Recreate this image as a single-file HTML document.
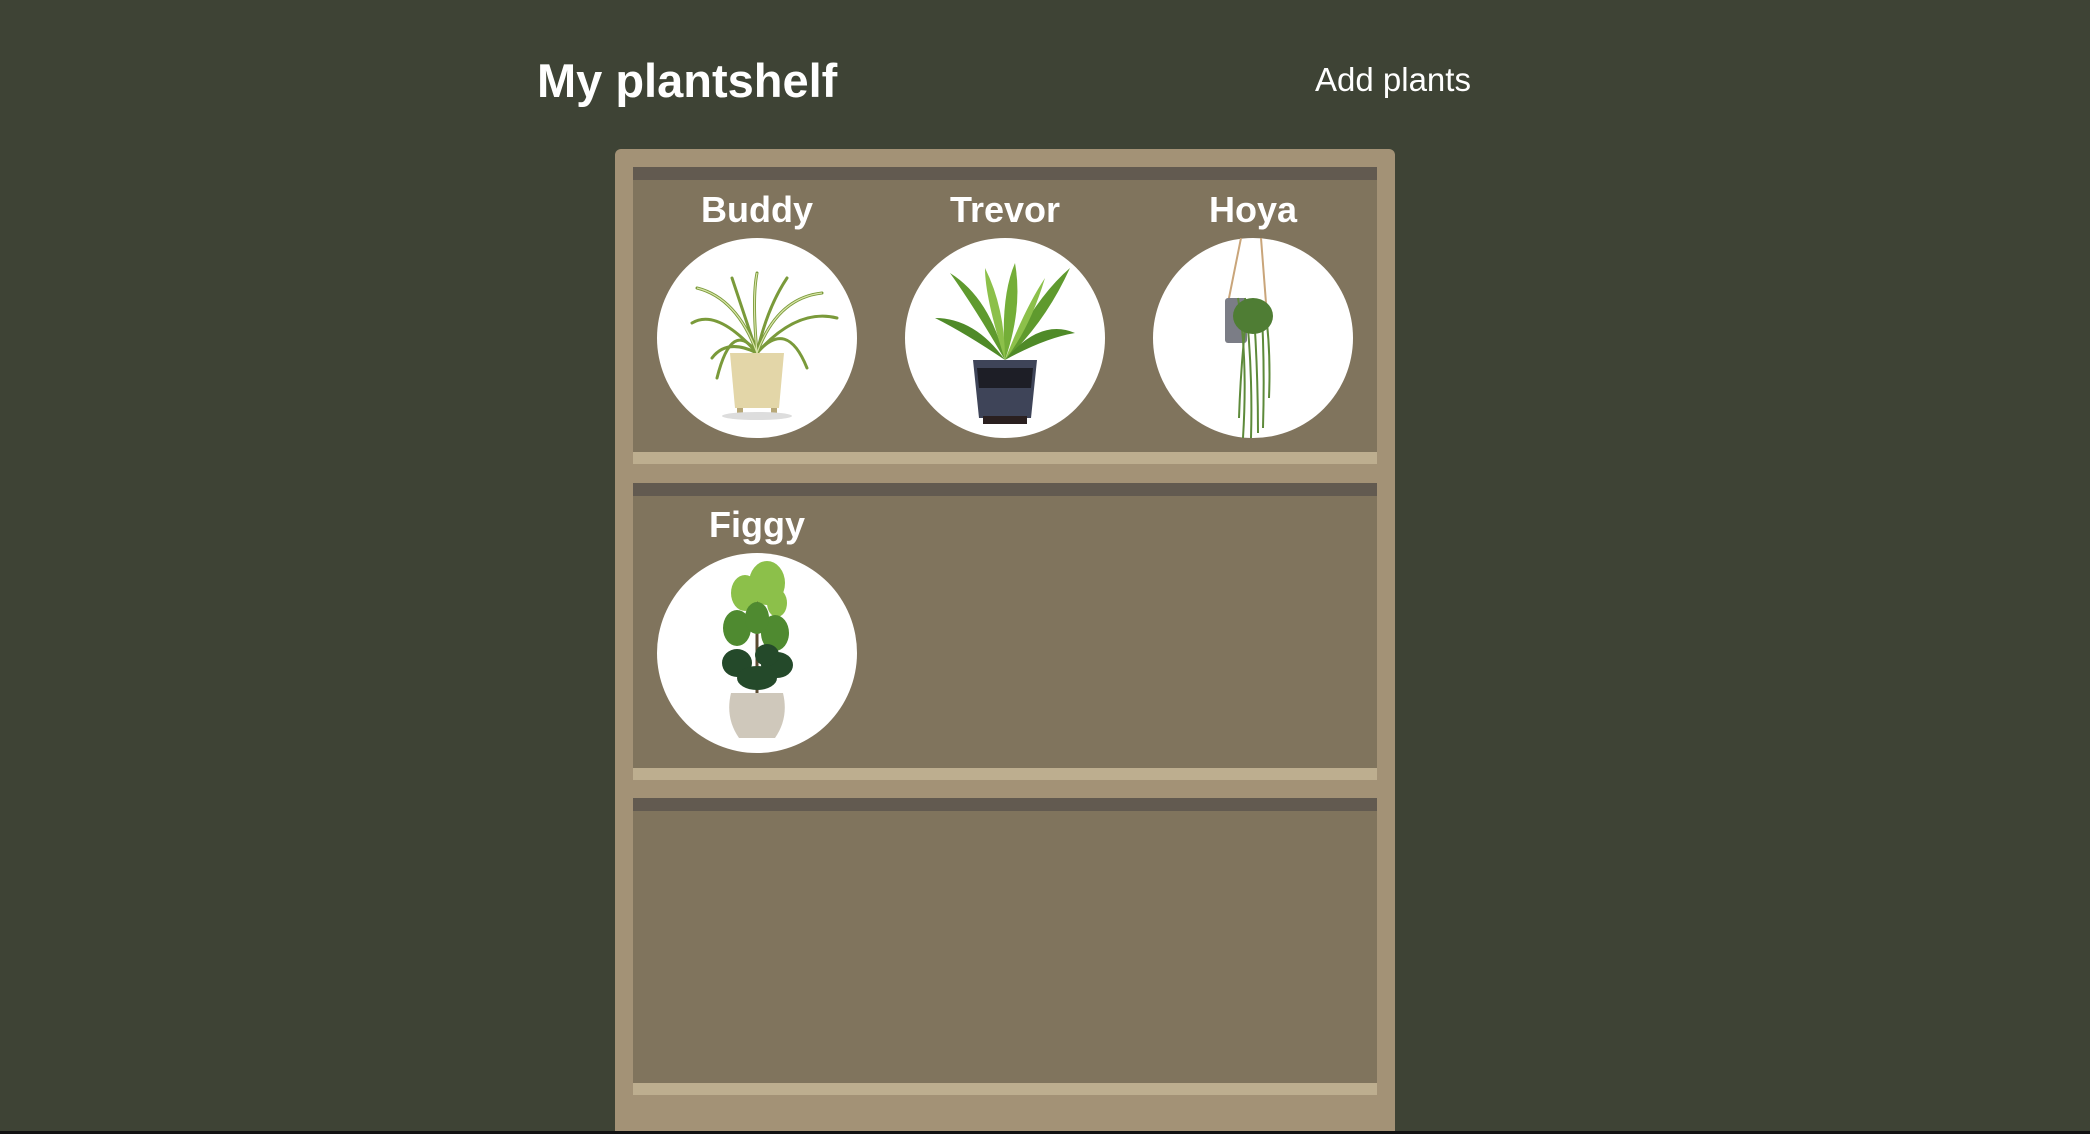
<!DOCTYPE html>
<html><head><meta charset="utf-8"><style>
html,body{margin:0;padding:0;}
body{width:2090px;height:1134px;background:#3e4335;position:relative;overflow:hidden;font-family:"Liberation Sans",Arial,sans-serif;color:#fff;}
.t{position:absolute;left:537px;top:54px;font-size:47px;line-height:54px;font-weight:bold;margin:0;white-space:nowrap;}
.add{position:absolute;left:1315px;top:61px;font-size:33px;white-space:nowrap;}
.panel{position:absolute;left:615px;top:149px;width:780px;height:982px;background:#a39276;border-radius:6px 6px 0 0;}
.shelf{position:absolute;left:633px;width:744px;height:297px;background:#80745d;}
.shelf .d{position:absolute;left:0;top:0;width:100%;height:13px;background:#625a50;}
.shelf .l{position:absolute;left:0;bottom:0;width:100%;height:12px;background:#bdae8f;}
.plant{position:absolute;width:200px;text-align:center;}
.plant .n{font-size:36px;font-weight:bold;height:41px;line-height:41px;margin-bottom:8px;}
.plant svg{display:block;width:200px;height:200px;}
.bot{position:absolute;left:0;top:1131px;width:2090px;height:3px;background:#111;}
</style></head><body>
<div class="t">My plantshelf</div>
<div class="add">Add plants</div>
<div class="panel"></div>
<div class="shelf" style="top:167px"><div class="d"></div><div class="l"></div></div>
<div class="shelf" style="top:483px"><div class="d"></div><div class="l"></div></div>
<div class="shelf" style="top:798px"><div class="d"></div><div class="l"></div></div>

<div class="plant" style="left:657px;top:189px"><div class="n">Buddy</div>
<svg viewBox="0 0 200 200"><circle cx="100" cy="100" r="100" fill="#fff"/>
<g fill="none" stroke="#7a9a3a" stroke-width="3" stroke-linecap="round">
<path d="M100 115 Q80 60 40 50"/><path d="M100 115 Q75 80 60 140"/><path d="M100 115 Q120 60 165 55"/><path d="M100 115 Q130 80 150 130"/><path d="M100 115 Q95 60 100 35"/><path d="M100 115 Q60 70 35 85"/><path d="M100 115 Q140 70 180 80"/><path d="M100 115 Q110 70 130 40"/><path d="M100 115 Q85 70 75 40"/><path d="M100 115 Q70 100 55 120"/></g>
<g fill="none" stroke="#d8e4a8" stroke-width="1.2"><path d="M100 115 Q80 60 40 50"/><path d="M100 115 Q120 60 165 55"/><path d="M100 115 Q95 60 100 35"/></g>
<path d="M73 115 L127 115 L122 170 L78 170 Z" fill="#e3d6a8"/><rect x="80" y="170" width="6" height="6" fill="#b8a878"/><rect x="114" y="170" width="6" height="6" fill="#b8a878"/>
<ellipse cx="100" cy="178" rx="35" ry="4" fill="#ddd"/></svg></div>

<div class="plant" style="left:905px;top:189px"><div class="n">Trevor</div>
<svg viewBox="0 0 200 200"><circle cx="100" cy="100" r="100" fill="#fff"/>
<g fill="#5f9a2e"><path d="M100 122 Q70 70 45 35 Q85 60 100 122Z"/><path d="M100 122 Q95 60 110 25 Q118 70 100 122Z" fill="#74ae38"/><path d="M100 122 Q130 60 165 30 Q140 85 100 122Z"/><path d="M100 122 Q60 95 30 80 Q70 80 100 122Z" fill="#4f8a28"/><path d="M100 122 Q140 100 170 95 Q135 80 100 122Z" fill="#4f8a28"/><path d="M100 122 Q80 60 80 30 Q100 70 100 122Z" fill="#8cc04a"/><path d="M100 122 Q120 70 140 40 Q125 90 100 122Z" fill="#8cc04a"/></g>
<path d="M68 122 L132 122 L126 180 L74 180 Z" fill="#3e4458"/><path d="M72 130 L128 130 L126 150 L74 150Z" fill="#1d1e26"/><rect x="78" y="178" width="44" height="8" fill="#2a2020"/></svg></div>

<div class="plant" style="left:1153px;top:189px"><div class="n">Hoya</div>
<svg viewBox="0 0 200 200"><circle cx="100" cy="100" r="100" fill="#fff"/>
<path d="M88 0 L75 65 M108 0 L113 65" stroke="#c9a57a" stroke-width="2" fill="none"/>
<rect x="72" y="60" width="22" height="45" rx="3" fill="#7b7d86"/>
<g stroke="#5d8a3a" stroke-width="2" fill="none"><path d="M85 60 Q95 120 90 200"/><path d="M92 60 Q100 130 98 200"/><path d="M100 62 Q105 130 105 195"/><path d="M108 62 Q112 120 110 190"/><path d="M95 65 Q88 120 86 180"/><path d="M112 70 Q118 110 116 160"/></g>
<ellipse cx="100" cy="78" rx="20" ry="18" fill="#4f7d34"/></svg></div>

<div class="plant" style="left:657px;top:504px"><div class="n">Figgy</div>
<svg viewBox="0 0 200 200"><circle cx="100" cy="100" r="100" fill="#fff"/>
<path d="M100 140 L100 30" stroke="#5a4a30" stroke-width="3"/>
<g fill="#8cc04a"><ellipse cx="110" cy="30" rx="18" ry="22"/><ellipse cx="88" cy="40" rx="14" ry="18"/><ellipse cx="120" cy="50" rx="10" ry="14"/></g>
<g fill="#4f8a30"><ellipse cx="80" cy="75" rx="14" ry="18"/><ellipse cx="118" cy="80" rx="14" ry="18"/><ellipse cx="100" cy="65" rx="12" ry="16"/></g>
<g fill="#24492a"><ellipse cx="80" cy="110" rx="15" ry="14"/><ellipse cx="120" cy="112" rx="16" ry="13"/><ellipse cx="100" cy="125" rx="20" ry="12"/><ellipse cx="110" cy="102" rx="12" ry="11"/></g>
<path d="M74 140 L126 140 Q132 165 118 185 L82 185 Q68 165 74 140Z" fill="#cfc8bb"/></svg></div>

<div class="bot"></div>
</body></html>
